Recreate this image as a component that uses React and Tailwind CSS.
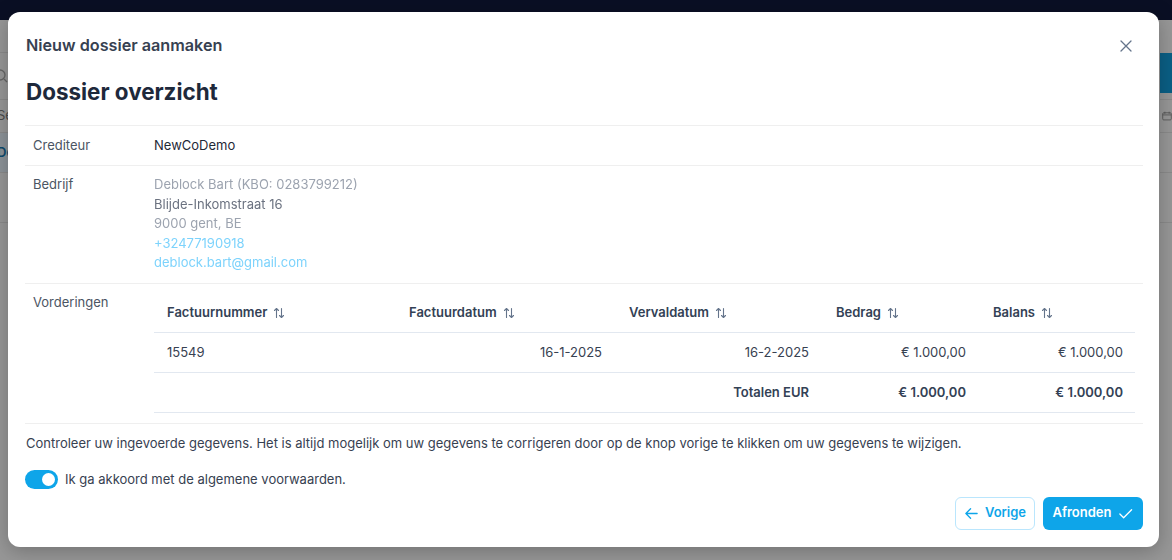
import React from "react";

const SortIcon = () => (
  <svg width="12" height="12" viewBox="0 0 12 12" fill="none" stroke="#64748b" strokeWidth="1.1" strokeLinecap="round" strokeLinejoin="round" className="ml-[6px] inline-block">
    <path d="M3.5 10.5V1.5M1.5 3.5L3.5 1.5L5.5 3.5" />
    <path d="M8.5 1.5V10.5M6.5 8.5L8.5 10.5L10.5 8.5" />
  </svg>
);

const ArrowLeft = () => (
  <svg width="15" height="15" viewBox="0 0 16 16" fill="none" stroke="currentColor" strokeWidth="1.4" strokeLinecap="round" strokeLinejoin="round">
    <path d="M14 8H2M7 3L2 8L7 13" />
  </svg>
);

const Check = () => (
  <svg width="15" height="15" viewBox="0 0 16 16" fill="none" stroke="currentColor" strokeWidth="1.4" strokeLinecap="round" strokeLinejoin="round">
    <path d="M2 8.5L6 12.5L14.5 4" />
  </svg>
);

export default function App() {
  const cols = [
    { h: "Factuurnummer", w: "w-[242px]" },
    { h: "Factuurdatum", w: "w-[220px]" },
    { h: "Vervaldatum", w: "w-[207px]" },
    { h: "Bedrag", w: "w-[157px]" },
    { h: "Balans", w: "w-[155px]" },
  ];
  return (
    <div
      className="relative h-[560px] w-[1172px] overflow-hidden bg-[#979797]"
      style={{ fontFamily: "Inter, 'Noto Sans', sans-serif" }}
    >
      {/* underlying page */}
      <div className="h-[20px] bg-[#0a0f24]" />
      <div className="flex h-[540px] justify-between">
        <div className="flex w-[8px] flex-col overflow-hidden">
          <div className="h-[33px] border-b border-[#8a8a8a]" />
          <div className="flex h-[47px] items-center border-b border-[#8a8a8a] text-[#6b6b6b]">
            <svg width="14" height="14" viewBox="0 0 14 14" fill="none" stroke="#666" strokeWidth="1.3" className="-ml-[6px]"><circle cx="6" cy="6" r="5" /><path d="M10 10l3 3" /></svg>
          </div>
          <div className="flex h-[33px] items-center border-b border-[#8a8a8a] text-[13px] text-[#4b4b4b]">
            <span className="-ml-[3px]">Se</span>
          </div>
          <div className="flex h-[40px] items-center bg-[#8d9499] border-b border-[#8a8a8a] text-[13px] font-semibold text-[#0c4a6e]">
            <span className="-ml-[3px]">De</span>
          </div>
          <div className="h-[50px] border-b border-[#8a8a8a]" />
        </div>
        <div className="flex w-[12px] flex-col overflow-hidden">
          <div className="h-[33px]" />
          <div className="h-[40px] bg-[#0a5f85]" />
          <div className="h-[7px] border-b border-[#8a8a8a]" />
          <div className="flex h-[33px] items-center border-b border-[#8a8a8a]">
            <svg width="14" height="14" viewBox="0 0 14 14" fill="none" stroke="#555" strokeWidth="1.2" className="ml-[2px]"><rect x="1" y="2.5" width="12" height="10" rx="1.5" /><path d="M1 5.5h12M4 1v3M10 1v3" /></svg>
          </div>
          <div className="h-[40px] border-b border-[#8a8a8a]" />
          <div className="h-[50px] border-b border-[#8a8a8a]" />
        </div>
      </div>

      {/* dialog */}
      <div className="absolute left-[8px] top-[12px] flex h-[535px] w-[1151px] flex-col rounded-[12px] bg-white pl-[17px] pr-[16px] shadow-[0_4px_20px_rgba(0,0,0,0.25)]">
        <div className="flex h-[66px] items-center justify-between pt-[1px]">
          <div className="pl-[1px] text-[16.2px] font-semibold text-[#374151]">Nieuw dossier aanmaken</div>
          <button className="mr-[3px] flex h-[28px] w-[28px] items-center justify-center text-[#64748b]">
            <svg width="12" height="12" viewBox="0 0 12 12" fill="none" stroke="currentColor" strokeWidth="1.3" strokeLinecap="round"><path d="M1 1l10 10M11 1L1 11" /></svg>
          </button>
        </div>
        <div className="flex h-[47px] items-start">
          <h1 className="pl-[1px] text-[22.4px] font-bold leading-[28px] text-[#1e293b]">Dossier overzicht</h1>
        </div>

        <div className="border-t border-[#efefef] text-[13px]">
          <div className="flex h-[40px] items-center border-b border-[#efefef]">
            <div className="w-[129px] pl-[8px] text-[#4b5563]">Crediteur</div>
            <div className="text-[#1f2937]">NewCoDemo</div>
          </div>
          <div className="flex h-[118px] border-b border-[#efefef] pt-[9px]">
            <div className="w-[129px] pl-[8px] leading-[19.5px] text-[#4b5563]">Bedrijf</div>
            <div className="flex flex-col leading-[19.5px] blur-[0.4px]">
              <span className="text-[#9ca3af]">Deblock Bart (KBO: 0283799212)</span>
              <span className="text-[#6b7280]">Blijde-Inkomstraat 16</span>
              <span className="text-[#9ca3af]">9000 gent, BE</span>
              <span className="text-[#7dd3fc]">+32477190918</span>
              <span className="text-[#7dd3fc]">deblock.bart@gmail.com</span>
            </div>
          </div>
          <div className="flex h-[140px] border-b border-[#efefef] pt-[9px]">
            <div className="w-[129px] pl-[8px] leading-[19.5px] text-[#4b5563]">Vorderingen</div>
            <div className="w-[981px]">
              <div className="flex h-[40px] items-center border-b border-[#e2e8f0] font-semibold text-[#334155]">
                {cols.map((c) => (
                  <div key={c.h} className={`${c.w} flex items-center pl-[13px]`}>
                    {c.h}
                    <SortIcon />
                  </div>
                ))}
              </div>
              <div className="flex h-[40px] items-center border-b border-[#e2e8f0] text-[#374151]">
                <div className="w-[242px] pl-[13px]">15549</div>
                <div className="w-[220px] pr-[14px] text-right">16-1-2025</div>
                <div className="w-[207px] pr-[14px] text-right">16-2-2025</div>
                <div className="w-[157px] pr-[14px] text-right">€ 1.000,00</div>
                <div className="w-[155px] pr-[12px] text-right">€ 1.000,00</div>
              </div>
              <div className="flex h-[40px] items-center border-b border-[#e2e8f0] font-semibold text-[#334155]">
                <div className="w-[242px]" />
                <div className="w-[220px]" />
                <div className="w-[207px] pr-[14px] text-right">Totalen EUR</div>
                <div className="w-[157px] pr-[14px] text-right">€ 1.000,00</div>
                <div className="w-[155px] pr-[12px] text-right">€ 1.000,00</div>
              </div>
            </div>
          </div>
        </div>

        <p className="mt-[10px] pl-[1px] text-[13px] leading-[19px] text-[#374151]">
          Controleer uw ingevoerde gegevens. Het is altijd mogelijk om uw gegevens te corrigeren door op de knop vorige te klikken om uw gegevens te wijzigen.
        </p>

        <div className="mt-[17px] flex items-center gap-[7px]">
          <div className="relative h-[19px] w-[33px] rounded-full bg-[#0ea5e9]">
            <div className="absolute right-[3px] top-[3px] h-[13px] w-[13px] rounded-full bg-white" />
          </div>
          <span className="text-[13px] text-[#374151]">Ik ga akkoord met de algemene voorwaarden.</span>
        </div>

        <div className="mt-[7px] flex justify-end gap-[8px]">
          <button className="flex h-[33px] w-[80px] items-center justify-center gap-[6px] rounded-[6px] border border-[#bae6fd] bg-white text-[13px] font-semibold text-[#0ea5e9]">
            <ArrowLeft />
            Vorige
          </button>
          <button className="flex h-[33px] w-[100px] items-center justify-center gap-[7px] rounded-[6px] bg-[#0ea5e9] text-[13px] font-semibold text-white">
            Afronden
            <Check />
          </button>
        </div>
      </div>
    </div>
  );
}
